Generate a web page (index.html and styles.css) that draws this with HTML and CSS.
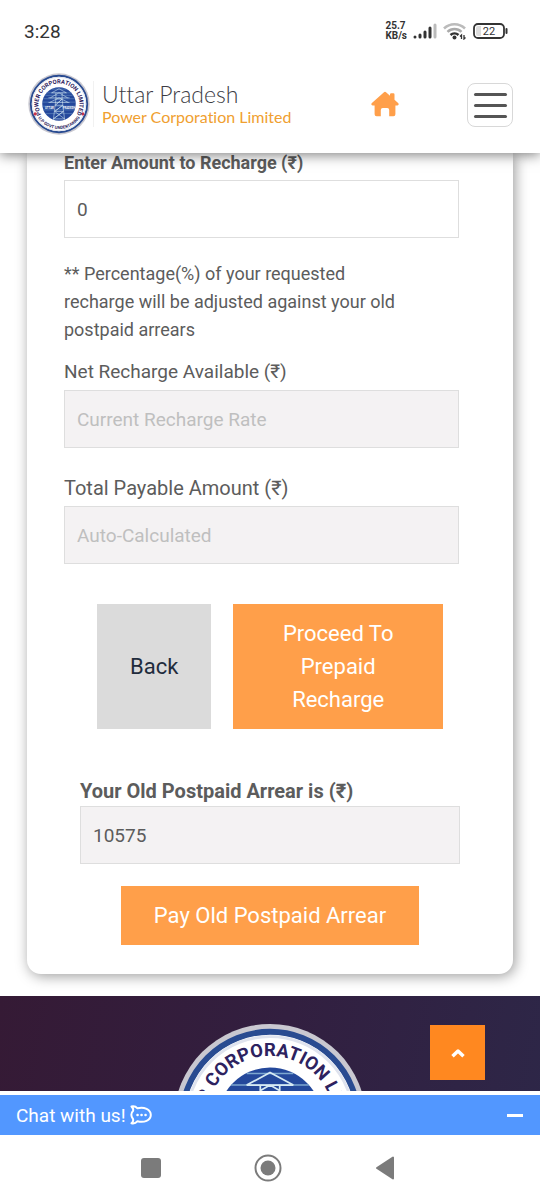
FILE: index.html
```
<!DOCTYPE html>
<html lang="en">
<head>
  <meta charset="UTF-8" />
  <meta name="viewport" content="width=device-width, initial-scale=1.0"/>
  <title>Uttar Pradesh Power Corporation Limited</title>
  <link rel="stylesheet" href="styles.css">
</head>
<body>
  <div class="status-bar">
    <span class="clock">3:28</span>
    <div class="status-icons">
      <span class="speed">25.7<br>KB/s</span>
      <svg width="24" height="16" viewBox="0 0 24 16" aria-hidden="true">
        <g stroke="#333" stroke-width="3" stroke-linecap="round">
          <path d="M2 14v0M7 14v-2M12 14V9M17 14V5"/>
          <path d="M22 14V2" stroke="#bbb"/>
        </g>
      </svg>
      <svg width="24" height="18" viewBox="0 0 24 18" fill="none" aria-hidden="true">
        <g stroke-width="2.500">
          <path d="M1 6.500a15 15 0 0 1 21 0" stroke="#bbb"/>
          <path d="M4.500 9.800a10 10 0 0 1 14 0" stroke="#aaa"/>
          <path d="M7.500 13a6 6 0 0 1 8 0" stroke="#333"/>
        </g>
        <circle cx="11.500" cy="15.500" r="2" fill="#333"/>
        <path d="M18.500 17v-4l-1.500 1.500M21 13v4l1.500-1.500" stroke="#333" stroke-width="1.300"/>
      </svg>
      <svg class="battery" width="35" height="16" viewBox="0 0 35 16" aria-hidden="true">
        <rect x="1" y="1" width="30" height="14" rx="4" fill="#fff" stroke="#333" stroke-width="1.800"/>
        <path d="M5 3h3v10H5a2 2 0 0 1-2-2V5a2 2 0 0 1 2-2z" fill="#ddd"/>
        <path d="M33.500 6v4" stroke="#333" stroke-width="2" stroke-linecap="round"/>
        <text x="16" y="12" text-anchor="middle">22</text>
      </svg>
    </div>
  </div>

  <header class="header">
    <a href="#" class="brand">
      <svg class="brand-logo" viewBox="0 0 200 200" role="img" aria-label="UPPCL logo">
        <defs>
          <path id="arc-top" d="M46 137.900A66 66 0 1 1 154 137.900"/>
          <path id="arc-bottom" d="M24 126A80 80 0 0 0 176 126"/>
          <g id="seal">
            <circle cx="100" cy="100" r="99" fill="#c9c8d0"/>
            <circle cx="100" cy="100" r="91" fill="#fff" stroke="#294b91" stroke-width="6"/>
            <circle cx="100" cy="100" r="86" fill="none" stroke="#dfe3ee" stroke-width="3"/>
            <circle cx="100" cy="100" r="54" fill="#24489b"/>
            <path d="M76 52h48M60 64h80M56 72h88M50 83h100M47 94h106M47 107h106M50 119h100M56 131h88" stroke="#7da7d0" stroke-width="1.500"/>
            <path d="M100 51L76 64h48zM90 64v20l-8 66M110 64v20l8 66M72 80l28-16 28 16M66 80h68M70 95l30-15 30 15M66 95h68M90 84h20L88 104h24L86 124h28L82 148M110 84L88 104M112 104L86 124M114 124L82 148h36L86 124" fill="none" stroke="#d6eaf3" stroke-width="1.800"/>
            <circle cx="23" cy="132" r="5" fill="#c8344b"/>
            <circle cx="177" cy="132" r="5" fill="#c8344b"/>
            <text class="seal-top"><textPath href="#arc-top" startOffset="50%" text-anchor="middle">POWER CORPORATION LIMITED</textPath></text>
            <text class="seal-bottom"><textPath href="#arc-bottom" startOffset="50%" text-anchor="middle">U.P GOVT UNDERTAKING</textPath></text>
            <text class="seal-name" x="69" y="116" text-anchor="middle">UTTAR</text>
            <text class="seal-name" x="132" y="116" text-anchor="middle">PRADESH</text>
          </g>
        </defs>
        <use href="#seal"/>
      </svg>
      <span class="brand-text">
        <span class="brand-state">Uttar Pradesh</span>
        <span class="brand-company">Power Corporation Limited</span>
      </span>
    </a>
    <a href="#" class="home-link" aria-label="Home">
      <svg width="28" height="26" viewBox="0 0 28 26" fill="#ff9f4a" aria-hidden="true">
        <path d="M12.700 1.400a2 2 0 0 1 2.600 0L19 4.700V3.500A1.200 1.200 0 0 1 20.200 2.300h2.100a1.200 1.200 0 0 1 1.200 1.200v5.200l3.600 3.400c1 1 .5 2.300-.7 2.300h-2v8.800a2 2 0 0 1-2 2h-4.200V19a2 2 0 0 0-2-2h-4.400a2 2 0 0 0-2 2v6.200H5.600a2 2 0 0 1-2-2v-8.800h-2c-1.200 0-1.700-1.300-.7-2.300z"/>
      </svg>
    </a>
    <button type="button" class="menu-btn" aria-label="Menu">
      <span></span><span></span><span></span>
    </button>
  </header>

  <main class="content">
    <form class="card">
      <label class="bold first-label" for="amount">Enter Amount to Recharge (₹)</label>
      <input type="text" id="amount" value="0">
      <p class="note">** Percentage(%) of your requested recharge will be adjusted against your old postpaid arrears</p>
      <label for="net">Net Recharge Available (₹)</label>
      <input type="text" id="net" placeholder="Current Recharge Rate" readonly>
      <label class="total-label" for="total">Total Payable Amount (₹)</label>
      <input type="text" id="total" placeholder="Auto-Calculated" readonly>
      <div class="actions">
        <button type="button" class="btn btn-back">Back</button>
        <button type="button" class="btn btn-proceed">Proceed To Prepaid Recharge</button>
      </div>
      <div class="arrear">
        <label class="bold" for="arrear">Your Old Postpaid Arrear is (₹)</label>
        <input type="text" id="arrear" value="10575" readonly>
        <button type="button" class="btn btn-pay">Pay Old Postpaid Arrear</button>
      </div>
    </form>

    <footer class="footer">
      <svg class="footer-logo" viewBox="0 0 200 200" aria-hidden="true"><use href="#seal"/></svg>
    </footer>

    <button type="button" class="to-top" aria-label="Back to top">
      <svg width="14" height="10" viewBox="0 0 14 10" fill="none" stroke="#fff" stroke-width="3.500" aria-hidden="true"><path d="M1.500 8.200L7 3l5.500 5.200" stroke-linejoin="round"/></svg>
    </button>
  </main>

  <button type="button" class="chat-bar">
    <span>Chat with us!</span>
    <svg width="22" height="20" viewBox="0 0 22 20" fill="none" stroke="#fff" stroke-width="2" stroke-linejoin="round" aria-hidden="true">
      <path d="M1.500 1.500C4 1 6.500 2.200 7.500 3.300 14 1.500 20.800 4.600 20.800 10S14 18 7.500 16.200C6 18 3.500 18.800 1.500 18.300 3 17 3.500 15.500 3 14 .8 11.500.8 8 3 6 3.600 4.500 3 3 1.500 1.500z"/>
      <path d="M7.500 10h.1M11.500 10h.1M15.500 10h.1" stroke-width="2.500" stroke-linecap="round"/>
    </svg>
    <span class="minimize"></span>
  </button>

  <nav class="system-nav" aria-label="System">
    <button type="button" aria-label="Recent apps"><svg width="20" height="20" viewBox="0 0 20 20"><rect width="20" height="20" rx="3" fill="#7b7b7b"/></svg></button>
    <button type="button" aria-label="Home screen"><svg width="28" height="28" viewBox="0 0 28 28"><circle cx="14" cy="14" r="12.500" fill="none" stroke="#7b7b7b" stroke-width="2"/><circle cx="14" cy="14" r="7.500" fill="#7b7b7b"/></svg></button>
    <button type="button" aria-label="Back"><svg width="20" height="24" viewBox="0 0 20 24"><path d="M18 1.500v21L2 12z" fill="#7b7b7b" stroke="#7b7b7b" stroke-width="2" stroke-linejoin="round"/></svg></button>
  </nav>
</body>
</html>
```

FILE: styles.css
```
:root {
  --orange: #ff9f4a;
  --text-grey: #5c5c5c;
  --field-grey: #f4f2f3;
  --chat-blue: #5297ff;
}

* {
  box-sizing: border-box;
}

body {
  margin: 0;
  height: 100vh;
  display: flex;
  flex-direction: column;
  font-family: Roboto, "Noto Sans", sans-serif;
  color: var(--text-grey);
  background-color: #fff;
}

button {
  font-family: inherit;
  border: none;
  padding: 0;
  cursor: pointer;
}

.status-bar {
  position: relative;
  z-index: 3;
  display: flex;
  justify-content: space-between;
  align-items: center;
  height: 62px;
  padding: 0 32px 0 24px;
  color: #333;
  background-color: #fff;
}

.clock {
  font-size: 19px;
}

.status-icons {
  display: flex;
  align-items: center;
  gap: 6px;
}

.speed {
  font-size: 10px;
  line-height: 10px;
  font-weight: 700;
}

.battery text {
  font-size: 11px;
  fill: #333;
}

.header {
  position: relative;
  z-index: 2;
  display: flex;
  align-items: center;
  height: 91px;
  padding: 0 27px 8px 28px;
  background-color: #fff;
  box-shadow: 0 2px 12px rgba(0, 0, 0, 0.5);
}

.brand {
  display: flex;
  align-items: center;
  flex: 1;
  color: #3c3c44;
  text-decoration: none;
}

.brand-logo {
  width: 62px;
  height: 62px;
}

.brand-text {
  display: flex;
  flex-direction: column;
  margin-left: 3px;
  padding-left: 8px;
  border-left: 1px solid #f1f1f1;
  font-family: Lato, "Open Sans", sans-serif;
  font-variant-ligatures: none;
}

.brand-state {
  font-size: 23px;
  line-height: 26px;
  font-weight: 300;
}

.brand-company {
  font-size: 16px;
  line-height: 20px;
  color: #f0a030;
}

.seal-top,
.seal-bottom,
.seal-name {
  font-family: Roboto, sans-serif;
  font-weight: 700;
  fill: #2d2260;
}

.seal-top {
  font-size: 19px;
}

.seal-bottom {
  font-size: 14px;
}

.seal-name {
  font-size: 9px;
  fill: #fff;
}

.home-link {
  display: flex;
  margin-right: 68px;
}

.menu-btn {
  display: flex;
  flex-direction: column;
  align-items: center;
  justify-content: center;
  gap: 8px;
  width: 46px;
  height: 44px;
  margin-top: 3px;
  background-color: #fff;
  border: 1px solid #d8d8d8;
  border-radius: 8px;
}

.menu-btn span {
  width: 33px;
  height: 3px;
  border-radius: 2px;
  background-color: #555;
}

.content {
  position: relative;
  flex: 1;
  min-height: 0;
  overflow: hidden;
}

.card {
  margin: 0 27px 22px;
  padding: 0 54px 29px 37px;
  border-radius: 0 0 14px 14px;
  box-shadow: 2px 2px 14px rgba(0, 0, 0, 0.4);
}

label {
  display: block;
  margin-bottom: 6px;
  font-size: 19px;
  line-height: 24px;
}

.bold {
  font-weight: 700;
}

.first-label {
  margin-bottom: 7px;
  font-size: 18px;
  line-height: 20px;
}

.total-label {
  margin-top: 28px;
  font-size: 20px;
}

input {
  display: block;
  width: 100%;
  height: 58px;
  padding: 0 12px;
  border: 1px solid #dedede;
  border-radius: 0;
  font-family: inherit;
  font-size: 19px;
  color: var(--text-grey);
  background-color: #fff;
  outline: none;
}

input[readonly] {
  background-color: var(--field-grey);
}

input::placeholder {
  color: #bfbfbf;
}

.note {
  margin: 22px 0 16px;
  padding-right: 40px;
  font-size: 18px;
  line-height: 28px;
}

.actions {
  display: flex;
  gap: 22px;
  margin: 40px 16px 50px 33px;
}

.btn {
  padding: 13px 33px;
  font-size: 22px;
  line-height: 33px;
  color: #fff;
  background-color: var(--orange);
}

.btn-back {
  color: #1f2c3d;
  background-color: #dbdbdb;
}

.btn-proceed {
  flex: 1;
}

.arrear {
  margin-left: 16px;
  margin-right: -1px;
}

.arrear label {
  margin-bottom: 3px;
  font-size: 20px;
}

.btn-pay {
  display: block;
  margin: 22px auto 0;
}

.footer {
  display: flex;
  justify-content: center;
  padding: 27px 0;
  background: linear-gradient(100deg, #351a35, #321f40 50%, #2d2748);
}

.footer-logo {
  width: 194px;
  height: 194px;
}

.to-top {
  position: absolute;
  right: 55px;
  bottom: 11px;
  display: flex;
  align-items: center;
  justify-content: center;
  width: 55px;
  height: 55px;
  background-color: #ff8820;
}

.chat-bar {
  display: flex;
  align-items: center;
  gap: 4px;
  height: 44px;
  padding: 0 17px 0 16px;
  border-top: 4px solid #fff;
  font-size: 19px;
  color: #fff;
  background-color: var(--chat-blue);
}

.minimize {
  width: 16px;
  height: 3px;
  margin-left: auto;
  background-color: #fff;
}

.system-nav {
  display: flex;
  align-items: center;
  justify-content: center;
  gap: 93px;
  height: 65px;
  padding-right: 4px;
}

.system-nav button {
  display: flex;
  background: none;
}
```
